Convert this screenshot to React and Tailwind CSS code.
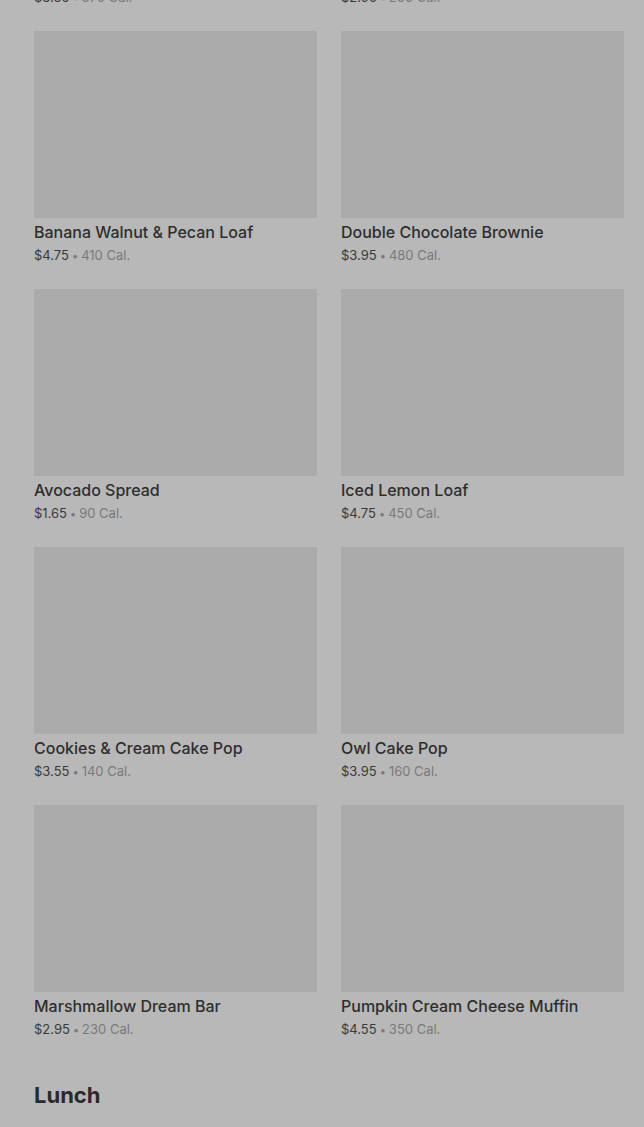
const items = [
  { name: "Classic Coffee Cake", price: "$3.35", cal: "370 Cal." },
  { name: "Butter Croissant", price: "$2.95", cal: "250 Cal." },
  { name: "Banana Walnut & Pecan Loaf", price: "$4.75", cal: "410 Cal." },
  { name: "Double Chocolate Brownie", price: "$3.95", cal: "480 Cal." },
  { name: "Avocado Spread", price: "$1.65", cal: "90 Cal." },
  { name: "Iced Lemon Loaf", price: "$4.75", cal: "450 Cal." },
  { name: "Cookies & Cream Cake Pop", price: "$3.55", cal: "140 Cal." },
  { name: "Owl Cake Pop", price: "$3.95", cal: "160 Cal." },
  { name: "Marshmallow Dream Bar", price: "$2.95", cal: "230 Cal." },
  { name: "Pumpkin Cream Cheese Muffin", price: "$4.55", cal: "350 Cal." },
];

function MenuCard({ item }) {
  return (
    <div>
      <div className="h-[187px] bg-[#ababab]" />
      <h3 className="mt-[2px] h-6 text-[16px] leading-6 font-medium text-[#2e2e2e]">
        {item.name}
      </h3>
      <p className="mt-[1px] h-5 text-[13px] leading-5 text-[#7a7a7a]">
        <span className="text-[#3a3a3a]">{item.price}</span>
        <span className="mx-[3px] text-[11px] leading-none">•</span>
        {item.cal}
      </p>
    </div>
  );
}

export default function App() {
  return (
    <div
      className="min-h-screen overflow-hidden bg-[#b8b8b8] pl-[34px] pr-[20px]"
      style={{ fontFamily: "Inter, 'Noto Sans', sans-serif" }}
    >
      <div className="-mt-[227px] grid grid-cols-2 gap-x-6 gap-y-6">
        {items.map((item) => (
          <MenuCard key={item.name} item={item} />
        ))}
      </div>
      <h2 className="mt-10 text-[22px] leading-8 font-bold text-[#2a2a2a]">
        Lunch
      </h2>
    </div>
  );
}
